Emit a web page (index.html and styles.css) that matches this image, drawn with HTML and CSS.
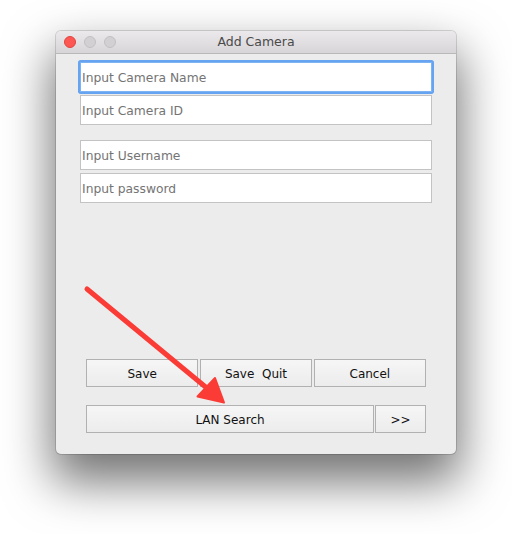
FILE: index.html
```html
<!DOCTYPE html>
<html>
<head>
<meta charset="utf-8">
<link rel="stylesheet" href="styles.css">
</head>
<body>
<div class="window">
  <div class="titlebar">
    <div class="lights">
      <span class="light red"></span>
      <span class="light gray"></span>
      <span class="light gray"></span>
    </div>
    <div class="title">Add Camera</div>
  </div>
  <div class="content">
    <div class="group">
      <input class="field focused" type="text" placeholder="Input Camera Name">
      <input class="field" type="text" placeholder="Input Camera ID">
    </div>
    <div class="group second">
      <input class="field" type="text" placeholder="Input Username">
      <input class="field" type="text" placeholder="Input password">
    </div>
    <div class="spacer"></div>
    <div class="buttons">
      <div class="row three">
        <button class="btn">Save</button>
        <button class="btn">Save&nbsp; Quit</button>
        <button class="btn">Cancel</button>
      </div>
      <div class="row two">
        <button class="btn">LAN Search</button>
        <button class="btn">&gt;&gt;</button>
      </div>
    </div>
  </div>
  <svg class="arrow" width="400" height="422" viewBox="0 0 400 422">
    <line x1="31" y1="258" x2="152" y2="358" stroke="#fb3c36" stroke-width="5" stroke-linecap="round"/>
    <polygon points="141.5,365.5 159,347 168,371.5" fill="#fb3c36" stroke="#fb3c36" stroke-width="2" stroke-linejoin="round"/>
  </svg>
</div>
</body>
</html>
```
FILE: styles.css
```css
html, body {
  margin: 0;
  padding: 0;
  background: #ffffff;
}
body {
  width: 512px;
  height: 534px;
  overflow: hidden;
  font-family: "DejaVu Sans", "Liberation Sans", sans-serif;
}
.window {
  position: relative;
  margin: 31px 0 0 56px;
  width: 400px;
  height: 423px;
  box-sizing: border-box;
  background: #ececec;
  border-radius: 5px;
  box-shadow: 0 0 0 1px rgba(0,0,0,0.14), 0 24px 48px 4px rgba(0,0,0,0.55);
  display: flex;
  flex-direction: column;
  overflow: hidden;
}
.titlebar {
  height: 22px;
  flex: none;
  background: linear-gradient(#ebe9eb, #d7d5d7);
  border-bottom: 1px solid #b9b9b9;
  display: flex;
  align-items: center;
  position: relative;
}
.lights {
  display: flex;
  gap: 8px;
  padding-left: 8px;
}
.light {
  width: 12px;
  height: 12px;
  border-radius: 50%;
  box-sizing: border-box;
}
.light.red {
  background: #fc5753;
  border: 1px solid #e0443f;
}
.light.gray {
  background: #d2d0d2;
  border: 1px solid #c2c0c2;
}
.title {
  position: absolute;
  left: 0;
  right: 0;
  top: 0;
  line-height: 22px;
  text-align: center;
  font-size: 12.5px;
  color: #4a4a4a;
}
.content {
  flex: 1;
  display: flex;
  flex-direction: column;
  padding: 8px 24px 21px 24px;
}
.group {
  display: flex;
  flex-direction: column;
  gap: 3px;
}
.group.second {
  margin-top: 15px;
}
.field {
  height: 30px;
  box-sizing: border-box;
  border: 1px solid #c3c3c3;
  background: #ffffff;
  padding: 1px 1px 0 1px;
  margin: 0;
  font-family: "DejaVu Sans", "Liberation Sans", sans-serif;
  font-size: 12.3px;
  color: #333;
  outline: none;
  border-radius: 0;
}
.field::placeholder {
  color: #747474;
}
.field.focused {
  border-color: #7eb3f3;
  box-shadow: 0 0 0 2px #66a3f0;
  border-radius: 1px;
}
.spacer {
  flex: 1;
}
.buttons {
  padding: 0 6px;
  display: flex;
  flex-direction: column;
  gap: 18px;
}
.row {
  display: grid;
}
.row.three {
  grid-template-columns: 1fr 1fr 1fr;
  gap: 1.5px;
  height: 28px;
}
.row.two {
  grid-template-columns: 1fr 51px;
  gap: 1px;
  height: 28px;
}
.btn {
  margin: 0;
  box-sizing: border-box;
  border: 1px solid #b1b1b1;
  background: linear-gradient(#f6f6f6, #ececec);
  font-family: "DejaVu Sans", "Liberation Sans", sans-serif;
  font-size: 12px;
  color: #111;
  padding: 2px 0 0 0;
  border-radius: 0;
}
.arrow {
  position: absolute;
  left: 0;
  top: 0;
  pointer-events: none;
}
```
